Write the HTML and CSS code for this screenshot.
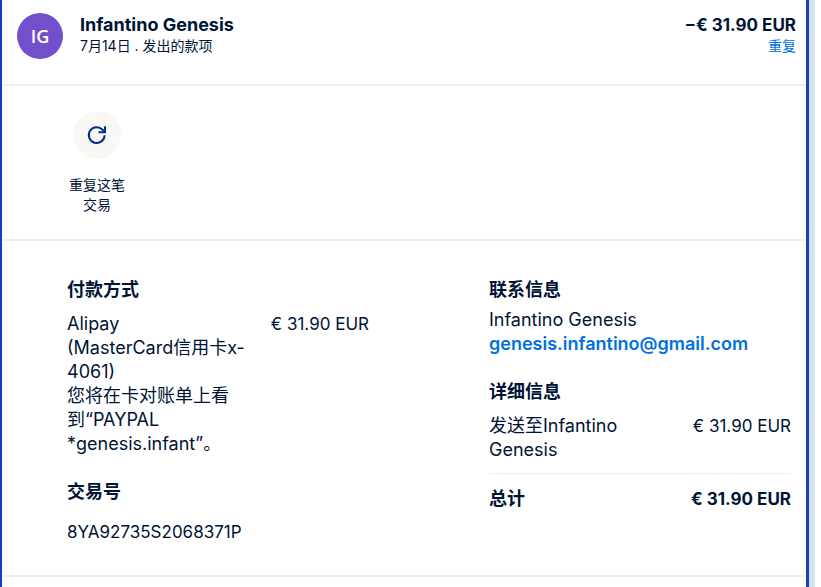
FILE: index.html
```html
<!DOCTYPE html>
<html lang="zh-CN">
<head>
    <meta charset="UTF-8">
    <meta name="viewport" content="width=device-width, initial-scale=1.0">
    <title>Infantino Genesis</title>
    <link rel="stylesheet" href="styles.css">
</head>
<body>
    <main class="transaction">
        <header class="summary">
            <div class="avatar">IG</div>
            <div class="summary-info">
                <h1 class="name">Infantino Genesis</h1>
                <p class="note">7月14日 . 发出的款项</p>
            </div>
            <div class="summary-total">
                <p class="name amount">−€ 31.90 EUR</p>
                <a class="note repeat-link" href="#repeat">重复</a>
            </div>
        </header>

        <section class="actions">
            <button class="action" id="repeat" type="button">
                <span class="action-icon">
                    <svg width="24" height="24" viewBox="0 0 24 24" fill="none" stroke="#003087" stroke-width="2">
                        <path d="M19.6 12.2a7.9 7.9 0 1 1-2.3-5.7l2.4 2.4"/>
                        <path d="M20 3.2v6h-6.5"/>
                    </svg>
                </span>
                <span class="action-label">重复这笔交易</span>
            </button>
        </section>

        <section class="details">
            <div class="column">
                <h2>付款方式</h2>
                <div class="row payment">
                    <p class="row-label">Alipay<br>(MasterCard信用卡x-4061)<br>您将在卡对账单上看到“PAYPAL *genesis.infant”。</p>
                    <p class="amount">€ 31.90 EUR</p>
                </div>
                <h2>交易号</h2>
                <p class="number">8YA92735S2068371P</p>
            </div>

            <div class="column">
                <h2>联系信息</h2>
                <div class="contact">
                    <p>Infantino Genesis</p>
                    <a class="email" href="mailto:genesis.infantino@gmail.com">genesis.infantino@gmail.com</a>
                </div>
                <h2>详细信息</h2>
                <div class="row sent">
                    <p class="row-label">发送至Infantino Genesis</p>
                    <p class="amount">€ 31.90 EUR</p>
                </div>
                <div class="row total">
                    <p class="row-label">总计</p>
                    <p class="amount">€ 31.90 EUR</p>
                </div>
            </div>
        </section>
    </main>
</body>
</html>
```
FILE: styles.css
```css
* {
    box-sizing: border-box;
}

body {
    margin: 0;
    padding-right: 12px;
    background-color: #fff;
    color: #001435;
    font-family: Inter, "Noto Sans CJK SC", Arial, sans-serif;
    font-size: 18px;
    line-height: 24px;
}

h1, h2, p {
    margin: 0;
}

h1, h2 {
    font-size: 18px;
}

a {
    color: #0070e0;
    text-decoration: none;
}

.transaction {
    min-height: 100vh;
    border-left: 2px solid #1040c0;
    border-right: 3px solid #1544b0;
    box-shadow: 6px 0 0 #d6e2f8;
}

.summary {
    display: flex;
    gap: 17px;
    padding: 13px 10px 25px 15px;
    border-bottom: 2px solid #efefef;
}

.avatar {
    display: flex;
    align-items: center;
    justify-content: center;
    width: 46px;
    height: 46px;
    border-radius: 50%;
    background-color: #7350cb;
    color: #fff;
    font-family: "Open Sans", sans-serif;
    font-size: 18px;
    font-weight: 600;
}

.summary-info {
    flex: 1;
}

.summary-total {
    text-align: right;
}

.name {
    font-weight: bold;
}

.note {
    display: block;
    font-size: 14px;
    line-height: 18px;
}

.actions {
    padding: 25px 63px 24px;
    border-bottom: 2px solid #efedea;
}

.action {
    display: flex;
    flex-direction: column;
    align-items: center;
    gap: 16px;
    width: 64px;
    padding: 0;
    border: 0;
    background: none;
    color: inherit;
    font: inherit;
    cursor: pointer;
}

.action-icon {
    display: flex;
    align-items: center;
    justify-content: center;
    width: 48px;
    height: 48px;
    border-radius: 50%;
    background-color: #faf8f5;
}

.action-label {
    font-size: 14px;
    line-height: 20px;
}

.details {
    display: grid;
    grid-template-columns: 1fr 1fr;
    gap: 120px;
    padding: 37px 15px 31px 65px;
    border-bottom: 2px solid #efedea;
}

.row {
    display: flex;
    justify-content: space-between;
    gap: 24px;
}

.row-label {
    flex: 1;
}

.amount, .number {
    font-size: 17px;
    white-space: nowrap;
}

.payment {
    margin: 10px 0 24px;
}

.number {
    margin-top: 16px;
}

.contact {
    margin: 6px 0 24px;
}

.email {
    font-weight: 600;
}

.sent {
    margin-top: 10px;
    padding-bottom: 11px;
    border-bottom: 1px solid #efedea;
}

.total {
    padding-top: 13px;
    font-weight: bold;
}
```
